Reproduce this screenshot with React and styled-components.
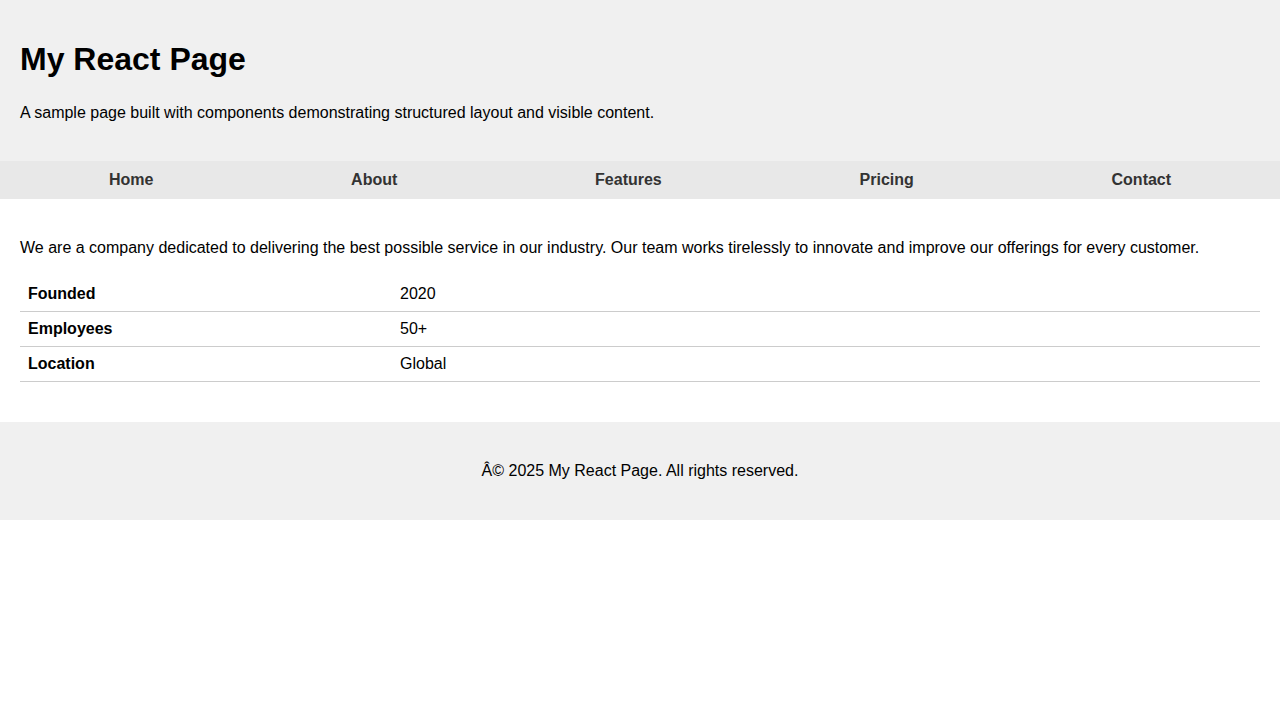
import React from 'react';
import styled, { createGlobalStyle } from 'styled-components';

const GlobalStyle = createGlobalStyle`
  body {
    margin: 0;
    font-family: "Liberation Sans", Arial, sans-serif;
    color: #000;
    background: #fff;
  }
`;

const Header = styled.header`
  background-color: #f0f0f0;
  padding: 20px;
`;

const Title = styled.h1`
  font-size: 32px;
  margin: 21.44px 0;
`;

const Text = styled.p`
  font-size: 16px;
  line-height: 1.6;
  margin: 16px 0;
`;

const Nav = styled.nav`
  background-color: #e8e8e8;
  padding: 10px;
  display: flex;
  justify-content: space-around;
`;

const NavLink = styled.a`
  color: #333;
  font-weight: bold;
  text-decoration: none;
  font-size: 16px;
`;

const Main = styled.main`
  padding: 20px;
`;

const InfoTable = styled.table`
  width: 100%;
  border-collapse: collapse;
  margin-bottom: 20px;
`;

const Row = styled.tr`
  border-bottom: 1px solid #ccc;
`;

const Label = styled.th`
  width: 30%;
  text-align: left;
  padding: 8px;
  font-size: 16px;
`;

const Value = styled.td`
  padding: 8px;
  font-size: 16px;
`;

const Footer = styled.footer`
  background-color: #f0f0f0;
  padding: 20px;
  text-align: center;
`;

const links = ['Home', 'About', 'Features', 'Pricing', 'Contact'];

const facts = [
  { label: 'Founded', value: '2020' },
  { label: 'Employees', value: '50+' },
  { label: 'Location', value: 'Global' }
];

export default function App() {
  return (
    <>
      <GlobalStyle />
      <Header>
        <Title>My React Page</Title>
        <Text>
          A sample page built with components demonstrating structured layout and visible content.
        </Text>
      </Header>
      <Nav>
        {links.map(link => (
          <NavLink key={link} href="#">
            {link}
          </NavLink>
        ))}
      </Nav>
      <Main>
        <Text>
          We are a company dedicated to delivering the best possible service in our industry. Our
          team works tirelessly to innovate and improve our offerings for every customer.
        </Text>
        <InfoTable>
          <tbody>
            {facts.map(fact => (
              <Row key={fact.label}>
                <Label>{fact.label}</Label>
                <Value>{fact.value}</Value>
              </Row>
            ))}
          </tbody>
        </InfoTable>
      </Main>
      <Footer>
        <Text>Â© 2025 My React Page. All rights reserved.</Text>
      </Footer>
    </>
  );
}
